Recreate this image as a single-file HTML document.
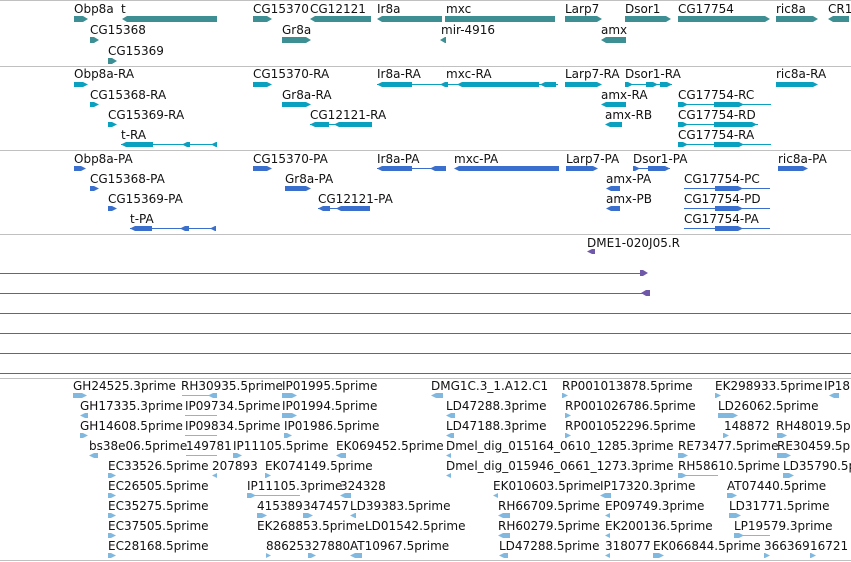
<!DOCTYPE html>
<html><head><meta charset="utf-8"><style>
body{margin:0;width:851px;height:562px;overflow:hidden;background:#fff;position:relative;font-family:"DejaVu Sans","Liberation Sans",sans-serif}
.t{position:absolute;font-size:12px;line-height:14px;white-space:nowrap;color:#111}
.h{position:absolute;left:0;width:851px;height:1px;background:#c0c0c0}
.p{position:absolute;left:0;height:1px;background:#7058a8}
.g{position:absolute;height:6px}
.r{clip-path:polygon(0 0,calc(100% - 5px) 0,100% 50%,calc(100% - 5px) 100%,0 100%)}
.l{clip-path:polygon(5px 0,100% 0,100% 100%,5px 100%,0 50%)}
.a{background:#3d8f93}.b{background:#0aa0c0}.c{background:#3a6fce}.e{background:#80b8e0}.v{background:#7058a8}
.ln{position:absolute;height:1px}
</style></head><body>
<div class="h" style="top:0"></div><div class="h" style="top:66px"></div><div class="h" style="top:150px"></div><div class="h" style="top:234px"></div>
<div class="p" style="top:273px;width:645px"></div><div class="p" style="top:293px;width:645px"></div>
<div class="p" style="top:313px;width:851px"></div><div class="p" style="top:333px;width:851px"></div><div class="p" style="top:353px;width:851px"></div><div class="p" style="top:373px;width:851px"></div>
<div class="h" style="top:378px"></div><div class="h" style="top:560px"></div>

<!-- track1 genes -->
<div class="t" style="left:74px;top:2px">Obp8a</div><div class="g a r" style="left:74px;top:16px;width:14px"></div>
<div class="t" style="left:121px;top:2px">t</div><div class="g a l" style="left:122px;top:16px;width:95px"></div>
<div class="t" style="left:253px;top:2px">CG15370</div><div class="g a r" style="left:253px;top:16px;width:19px"></div>
<div class="t" style="left:310px;top:2px">CG12121</div><div class="g a l" style="left:310px;top:16px;width:61px"></div>
<div class="t" style="left:377px;top:2px">Ir8a</div><div class="g a l" style="left:377px;top:16px;width:65px"></div>
<div class="t" style="left:446px;top:2px">mxc</div><div class="g a" style="left:445px;top:16px;width:110px"></div>
<div class="t" style="left:565px;top:2px">Larp7</div><div class="g a r" style="left:565px;top:16px;width:37px"></div>
<div class="t" style="left:625px;top:2px">Dsor1</div><div class="g a r" style="left:625px;top:16px;width:46px"></div>
<div class="t" style="left:678px;top:2px">CG17754</div><div class="g a r" style="left:678px;top:16px;width:92px"></div>
<div class="t" style="left:776px;top:2px">ric8a</div><div class="g a r" style="left:776px;top:16px;width:42px"></div>
<div class="t" style="left:828px;top:2px">CR1</div><div class="g a l" style="left:828px;top:16px;width:21px"></div>
<div class="t" style="left:90px;top:23px">CG15368</div><div class="g a r" style="left:90px;top:37px;width:9px"></div>
<div class="t" style="left:282px;top:23px">Gr8a</div><div class="g a r" style="left:282px;top:37px;width:29px"></div>
<div class="t" style="left:441px;top:23px">mir-4916</div><div class="g a l" style="left:440px;top:37px;width:6px"></div>
<div class="t" style="left:601px;top:23px">amx</div><div class="g a l" style="left:601px;top:37px;width:25px"></div>
<div class="t" style="left:108px;top:44px">CG15369</div><div class="g a r" style="left:108px;top:58px;width:9px"></div>

<!-- track2 transcripts -->
<div class="t" style="left:74px;top:67px">Obp8a-RA</div><div class="g b r" style="left:74px;top:82px;width:14px;height:5px"></div>
<div class="t" style="left:253px;top:67px">CG15370-RA</div><div class="g b r" style="left:253px;top:82px;width:19px;height:5px"></div>
<div class="t" style="left:377px;top:67px">Ir8a-RA</div><div class="ln b" style="left:377px;top:84px;width:70px"></div><div class="g b l" style="left:377px;top:82px;width:35px;height:5px"></div>
<div class="t" style="left:446px;top:67px">mxc-RA</div><div class="ln b" style="left:425px;top:84px;width:133px"></div><div class="g b l" style="left:440px;top:82px;width:8px;height:5px"></div><div class="g b l" style="left:457px;top:82px;width:82px;height:5px"></div><div class="g b l" style="left:540px;top:82px;width:16px;height:5px"></div>
<div class="t" style="left:565px;top:67px">Larp7-RA</div><div class="g b r" style="left:565px;top:82px;width:37px;height:5px"></div>
<div class="t" style="left:625px;top:67px">Dsor1-RA</div><div class="ln b" style="left:625px;top:84px;width:47px"></div><div class="g b r" style="left:625px;top:82px;width:8px;height:5px"></div><div class="g b r" style="left:646px;top:82px;width:12px;height:5px"></div><div class="g b r" style="left:660px;top:82px;width:12px;height:5px"></div>
<div class="t" style="left:776px;top:67px">ric8a-RA</div><div class="g b r" style="left:776px;top:82px;width:42px;height:5px"></div>
<div class="t" style="left:90px;top:88px">CG15368-RA</div><div class="g b r" style="left:90px;top:102px;width:9px;height:5px"></div>
<div class="t" style="left:282px;top:88px">Gr8a-RA</div><div class="g b r" style="left:282px;top:102px;width:29px;height:5px"></div>
<div class="t" style="left:601px;top:88px">amx-RA</div><div class="g b l" style="left:601px;top:102px;width:25px;height:5px"></div>
<div class="t" style="left:678px;top:88px">CG17754-RC</div><div class="ln b" style="left:678px;top:104px;width:93px"></div><div class="g b r" style="left:678px;top:102px;width:10px;height:5px"></div><div class="g b r" style="left:714px;top:102px;width:30px;height:5px"></div>
<div class="t" style="left:108px;top:108px">CG15369-RA</div><div class="g b r" style="left:108px;top:122px;width:9px;height:5px"></div>
<div class="t" style="left:310px;top:108px">CG12121-RA</div><div class="ln b" style="left:310px;top:124px;width:62px"></div><div class="g b l" style="left:310px;top:122px;width:19px;height:5px"></div><div class="g b l" style="left:334px;top:122px;width:38px;height:5px"></div>
<div class="t" style="left:605px;top:108px">amx-RB</div><div class="g b l" style="left:605px;top:122px;width:17px;height:5px"></div>
<div class="t" style="left:678px;top:108px">CG17754-RD</div><div class="ln b" style="left:678px;top:124px;width:80px"></div><div class="g b r" style="left:678px;top:122px;width:10px;height:5px"></div><div class="g b r" style="left:714px;top:122px;width:43px;height:5px"></div>
<div class="t" style="left:121px;top:128px">t-RA</div><div class="ln b" style="left:121px;top:144px;width:96px"></div><div class="g b l" style="left:121px;top:142px;width:32px;height:5px"></div><div class="g b l" style="left:182px;top:142px;width:8px;height:5px"></div><div class="g b l" style="left:211px;top:142px;width:6px;height:5px"></div>
<div class="t" style="left:678px;top:128px">CG17754-RA</div><div class="ln b" style="left:678px;top:144px;width:93px"></div><div class="g b r" style="left:678px;top:142px;width:10px;height:5px"></div><div class="g b r" style="left:714px;top:142px;width:30px;height:5px"></div>

<!-- track3 proteins -->
<div class="t" style="left:74px;top:152px">Obp8a-PA</div><div class="g c r" style="left:74px;top:166px;width:12px;height:5px"></div>
<div class="t" style="left:253px;top:152px">CG15370-PA</div><div class="g c r" style="left:253px;top:166px;width:19px;height:5px"></div>
<div class="t" style="left:377px;top:152px">Ir8a-PA</div><div class="ln c" style="left:377px;top:168px;width:69px"></div><div class="g c l" style="left:377px;top:166px;width:35px;height:5px"></div><div class="g c l" style="left:430px;top:166px;width:16px;height:5px"></div>
<div class="t" style="left:454px;top:152px">mxc-PA</div><div class="g c l" style="left:454px;top:166px;width:105px;height:5px"></div>
<div class="t" style="left:566px;top:152px">Larp7-PA</div><div class="g c r" style="left:566px;top:166px;width:32px;height:5px"></div>
<div class="t" style="left:633px;top:152px">Dsor1-PA</div><div class="ln c" style="left:633px;top:168px;width:37px"></div><div class="g c r" style="left:633px;top:166px;width:7px;height:5px"></div><div class="g c r" style="left:648px;top:166px;width:22px;height:5px"></div>
<div class="t" style="left:778px;top:152px">ric8a-PA</div><div class="g c r" style="left:778px;top:166px;width:30px;height:5px"></div>
<div class="t" style="left:90px;top:172px">CG15368-PA</div><div class="g c r" style="left:90px;top:186px;width:9px;height:5px"></div>
<div class="t" style="left:285px;top:172px">Gr8a-PA</div><div class="g c r" style="left:285px;top:186px;width:26px;height:5px"></div>
<div class="t" style="left:606px;top:172px">amx-PA</div><div class="g c l" style="left:606px;top:186px;width:14px;height:5px"></div>
<div class="t" style="left:684px;top:172px">CG17754-PC</div><div class="ln c" style="left:684px;top:188px;width:86px"></div><div class="g c r" style="left:715px;top:186px;width:28px;height:5px"></div>
<div class="t" style="left:108px;top:192px">CG15369-PA</div><div class="g c r" style="left:108px;top:206px;width:9px;height:5px"></div>
<div class="t" style="left:318px;top:192px">CG12121-PA</div><div class="ln c" style="left:318px;top:208px;width:52px"></div><div class="g c l" style="left:318px;top:206px;width:12px;height:5px"></div><div class="g c l" style="left:336px;top:206px;width:34px;height:5px"></div>
<div class="t" style="left:606px;top:192px">amx-PB</div><div class="g c l" style="left:606px;top:206px;width:14px;height:5px"></div>
<div class="t" style="left:684px;top:192px">CG17754-PD</div><div class="ln c" style="left:684px;top:208px;width:86px"></div><div class="g c r" style="left:715px;top:206px;width:28px;height:5px"></div>
<div class="t" style="left:130px;top:212px">t-PA</div><div class="ln c" style="left:130px;top:228px;width:86px"></div><div class="g c l" style="left:130px;top:226px;width:22px;height:5px"></div><div class="g c l" style="left:180px;top:226px;width:9px;height:5px"></div><div class="g c l" style="left:210px;top:226px;width:6px;height:5px"></div>
<div class="t" style="left:684px;top:212px">CG17754-PA</div><div class="ln c" style="left:684px;top:228px;width:86px"></div><div class="g c r" style="left:715px;top:226px;width:28px;height:5px"></div>

<!-- track4 -->
<div class="t" style="left:587px;top:236px">DME1-020J05.R</div><div class="g v l" style="left:587px;top:249px;width:8px;height:5px"></div>
<div class="g v r" style="left:640px;top:270px;width:8px;height:6px"></div>
<div class="g v l" style="left:641px;top:290px;width:9px;height:6px"></div>

<!-- ESTs -->
<div class="t" style="left:73px;top:379px">GH24525.3prime</div><div class="g e r" style="left:73px;top:393px;width:14px;height:5px"></div>
<div class="t" style="left:181px;top:379px">RH30935.5prime</div><div class="ln e" style="left:182px;top:395px;width:35px"></div><div class="g e l" style="left:208px;top:393px;width:9px;height:5px"></div>
<div class="t" style="left:282px;top:379px">IP01995.5prime</div><div class="g e r" style="left:282px;top:393px;width:15px;height:5px"></div>
<div class="t" style="left:431px;top:379px">DMG1C.3_1.A12.C1</div><div class="g e l" style="left:431px;top:393px;width:12px;height:5px"></div>
<div class="t" style="left:562px;top:379px">RP001013878.5prime</div><div class="g e r" style="left:562px;top:393px;width:6px;height:5px"></div>
<div class="t" style="left:715px;top:379px">EK298933.5prime</div><div class="g e r" style="left:715px;top:393px;width:6px;height:5px"></div>
<div class="t" style="left:824px;top:379px">IP18</div><div class="g e l" style="left:829px;top:393px;width:10px;height:5px"></div>

<div class="t" style="left:80px;top:399px">GH17335.3prime</div><div class="g e l" style="left:80px;top:413px;width:8px;height:5px"></div>
<div class="t" style="left:185px;top:399px">IP09734.5prime</div><div class="ln e" style="left:185px;top:415px;width:32px"></div>
<div class="t" style="left:282px;top:399px">IP01994.5prime</div><div class="g e r" style="left:282px;top:413px;width:15px;height:5px"></div>
<div class="t" style="left:446px;top:399px">LD47288.3prime</div><div class="g e l" style="left:446px;top:413px;width:9px;height:5px"></div>
<div class="t" style="left:565px;top:399px">RP001026786.5prime</div><div class="g e r" style="left:565px;top:413px;width:6px;height:5px"></div>
<div class="t" style="left:718px;top:399px">LD26062.5prime</div><div class="g e r" style="left:718px;top:413px;width:20px;height:5px"></div>

<div class="t" style="left:80px;top:419px">GH14608.5prime</div><div class="g e r" style="left:80px;top:433px;width:8px;height:5px"></div>
<div class="t" style="left:185px;top:419px">IP09834.5prime</div><div class="ln e" style="left:185px;top:435px;width:32px"></div>
<div class="t" style="left:284px;top:419px">IP01986.5prime</div><div class="g e r" style="left:284px;top:433px;width:8px;height:5px"></div>
<div class="t" style="left:446px;top:419px">LD47188.3prime</div><div class="g e l" style="left:446px;top:433px;width:8px;height:5px"></div>
<div class="t" style="left:565px;top:419px">RP001052296.5prime</div><div class="g e r" style="left:565px;top:433px;width:6px;height:5px"></div>
<div class="t" style="left:724px;top:419px">148872</div><div class="g e r" style="left:723px;top:433px;width:6px;height:5px"></div>
<div class="t" style="left:776px;top:419px">RH48019.5prime</div><div class="g e r" style="left:777px;top:433px;width:10px;height:5px"></div>

<div class="t" style="left:89px;top:439px">bs38e06.5prime</div><div class="g e l" style="left:89px;top:453px;width:9px;height:5px"></div>
<div class="t" style="left:186px;top:439px">149781</div><div class="ln e" style="left:186px;top:455px;width:31px"></div>
<div class="t" style="left:233px;top:439px">IP11105.5prime</div><div class="g e r" style="left:233px;top:453px;width:9px;height:5px"></div>
<div class="t" style="left:336px;top:439px">EK069452.5prime</div><div class="g e l" style="left:336px;top:453px;width:10px;height:5px"></div>
<div class="t" style="left:446px;top:439px">Dmel_dig_015164_0610_1285.3prime</div><div class="g e l" style="left:446px;top:453px;width:5px;height:5px"></div>
<div class="t" style="left:678px;top:439px">RE73477.5prime</div><div class="g e r" style="left:678px;top:453px;width:10px;height:5px"></div>
<div class="t" style="left:777px;top:439px">RE30459.5prime</div><div class="g e r" style="left:777px;top:453px;width:14px;height:5px"></div>

<div class="t" style="left:108px;top:459px">EC33526.5prime</div><div class="g e r" style="left:108px;top:473px;width:8px;height:5px"></div>
<div class="t" style="left:212px;top:459px">207893</div><div class="g e l" style="left:212px;top:473px;width:5px;height:5px"></div>
<div class="t" style="left:265px;top:459px">EK074149.5prime</div><div class="g e r" style="left:265px;top:473px;width:6px;height:5px"></div>
<div class="t" style="left:446px;top:459px">Dmel_dig_015946_0661_1273.3prime</div><div class="g e l" style="left:446px;top:473px;width:5px;height:5px"></div>
<div class="t" style="left:678px;top:459px">RH58610.5prime</div><div class="ln e" style="left:678px;top:475px;width:40px"></div><div class="g e r" style="left:678px;top:473px;width:9px;height:5px"></div>
<div class="t" style="left:783px;top:459px">LD35790.5prime</div><div class="g e r" style="left:783px;top:473px;width:11px;height:5px"></div>

<div class="t" style="left:108px;top:479px">EC26505.5prime</div><div class="g e r" style="left:108px;top:493px;width:8px;height:5px"></div>
<div class="t" style="left:247px;top:479px">IP11105.3prime</div><div class="ln e" style="left:247px;top:495px;width:53px"></div><div class="g e r" style="left:247px;top:493px;width:9px;height:5px"></div>
<div class="t" style="left:340px;top:479px">324328</div><div class="g e l" style="left:340px;top:493px;width:11px;height:5px"></div>
<div class="t" style="left:493px;top:479px">EK010603.5prime</div><div class="g e l" style="left:493px;top:493px;width:5px;height:5px"></div>
<div class="t" style="left:600px;top:479px">IP17320.3prime</div><div class="g e l" style="left:600px;top:493px;width:11px;height:5px"></div>
<div class="t" style="left:727px;top:479px">AT07440.5prime</div><div class="g e r" style="left:727px;top:493px;width:10px;height:5px"></div>

<div class="t" style="left:108px;top:499px">EC35275.5prime</div><div class="g e r" style="left:108px;top:513px;width:8px;height:5px"></div>
<div class="t" style="left:257px;top:499px">415389</div><div class="g e r" style="left:257px;top:513px;width:10px;height:5px"></div>
<div class="t" style="left:303px;top:499px">347457</div><div class="g e r" style="left:303px;top:513px;width:10px;height:5px"></div>
<div class="t" style="left:350px;top:499px">LD39383.5prime</div><div class="g e l" style="left:350px;top:513px;width:6px;height:5px"></div>
<div class="t" style="left:498px;top:499px">RH66709.5prime</div><div class="g e l" style="left:498px;top:513px;width:12px;height:5px"></div>
<div class="t" style="left:605px;top:499px">EP09749.3prime</div><div class="g e l" style="left:605px;top:513px;width:5px;height:5px"></div>
<div class="t" style="left:729px;top:499px">LD31771.5prime</div><div class="g e r" style="left:729px;top:513px;width:12px;height:5px"></div>

<div class="t" style="left:108px;top:519px">EC37505.5prime</div><div class="g e r" style="left:108px;top:533px;width:8px;height:5px"></div>
<div class="t" style="left:257px;top:519px">EK268853.5prime</div>
<div class="t" style="left:365px;top:519px">LD01542.5prime</div>
<div class="t" style="left:498px;top:519px">RH60279.5prime</div><div class="g e l" style="left:498px;top:533px;width:12px;height:5px"></div>
<div class="t" style="left:605px;top:519px">EK200136.5prime</div><div class="g e l" style="left:605px;top:533px;width:5px;height:5px"></div>
<div class="t" style="left:734px;top:519px">LP19579.3prime</div><div class="ln e" style="left:734px;top:535px;width:36px"></div><div class="g e r" style="left:734px;top:533px;width:10px;height:5px"></div>

<div class="t" style="left:108px;top:539px">EC28168.5prime</div><div class="g e r" style="left:108px;top:553px;width:8px;height:5px"></div>
<div class="t" style="left:266px;top:539px">886253</div><div class="g e r" style="left:266px;top:553px;width:5px;height:5px"></div>
<div class="t" style="left:312px;top:539px">27880</div><div class="g e r" style="left:308px;top:553px;width:8px;height:5px"></div>
<div class="t" style="left:350px;top:539px">AT10967.5prime</div><div class="g e l" style="left:350px;top:553px;width:12px;height:5px"></div>
<div class="t" style="left:499px;top:539px">LD47288.5prime</div><div class="g e l" style="left:499px;top:553px;width:9px;height:5px"></div>
<div class="t" style="left:605px;top:539px">318077</div><div class="g e l" style="left:605px;top:553px;width:5px;height:5px"></div>
<div class="t" style="left:653px;top:539px">EK066844.5prime</div><div class="g e r" style="left:653px;top:553px;width:11px;height:5px"></div>
<div class="t" style="left:764px;top:539px">366369</div><div class="g e r" style="left:764px;top:553px;width:6px;height:5px"></div>
<div class="t" style="left:810px;top:539px">16721</div><div class="g e r" style="left:810px;top:553px;width:6px;height:5px"></div>
</body></html>
